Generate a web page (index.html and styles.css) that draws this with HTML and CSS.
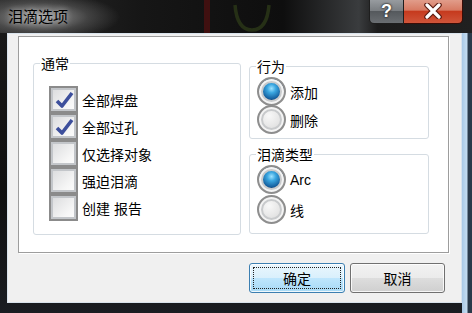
FILE: index.html
```html
<!DOCTYPE html>
<html>
<head>
    <meta charset="utf-8">
    <title>泪滴选项</title>
    <link rel="stylesheet" href="styles.css">
</head>
<body>
    <div class="window">
        <div class="titlebar">
            <!-- things seen through the glass -->
            <svg class="behind" width="120" height="33" viewBox="0 0 120 33">
                <rect x="0" y="0" width="6" height="33" fill="#401010"/>
                <path d="M31 5 Q33 30 48 30 Q63 30 65 5" fill="none" stroke="#263016" stroke-width="3.5"/>
            </svg>
            <span class="title">泪滴选项</span>
            <div class="caption-buttons">
                <div class="cap-btn help">?</div>
                <div class="cap-btn close">
                    <svg width="22" height="16" viewBox="0 0 22 16">
                        <path d="M5 2 L17 14 M17 2 L5 14" stroke="#5a1a10" stroke-width="5.5" stroke-linecap="round"/>
                        <path d="M5 2 L17 14 M17 2 L5 14" stroke="#fff" stroke-width="3.2" stroke-linecap="round"/>
                    </svg>
                </div>
            </div>
        </div>

        <div class="client">
            <div class="panel">
                <div class="group general">
                    <div class="group-title">通常</div>
                    <div class="check-list">
                        <div class="check"><span class="box"><svg width="22" height="20" viewBox="0 0 22 20"><path d="M4 11 L9 16 L19 3" fill="none" stroke="#3d4f9c" stroke-width="3.6" stroke-linejoin="round"/></svg></span>全部焊盘</div>
                        <div class="check"><span class="box"><svg width="22" height="20" viewBox="0 0 22 20"><path d="M4 11 L9 16 L19 3" fill="none" stroke="#3d4f9c" stroke-width="3.6" stroke-linejoin="round"/></svg></span>全部过孔</div>
                        <div class="check"><span class="box"></span>仅选择对象</div>
                        <div class="check"><span class="box"></span>强迫泪滴</div>
                        <div class="check"><span class="box"></span>创建 报告</div>
                    </div>
                </div>

                <div class="side">
                    <div class="group action">
                        <div class="group-title">行为</div>
                        <div class="radio tight"><span class="dot on"></span>添加</div>
                        <div class="radio tight"><span class="dot"></span>删除</div>
                    </div>
                    <div class="group shape">
                        <div class="group-title">泪滴类型</div>
                        <div class="radio"><span class="dot on"></span>Arc</div>
                        <div class="radio"><span class="dot"></span>线</div>
                    </div>
                </div>
            </div>

            <div class="buttons">
                <button class="btn default"><span class="focus">确定</span></button>
                <button class="btn">取消</button>
            </div>
        </div>
    </div>
</body>
</html>
```

FILE: styles.css
```css
body {
    margin: 0;
    background-color: #111;
    font-family: "Liberation Sans", "Noto Sans CJK SC", sans-serif;
}

.window {
    width: 472px;
    height: 313px;
    display: flex;
    flex-direction: column;
    background:
        linear-gradient(90deg, transparent 462px, #a9c9e6 462px, #c4dcf0 467px, #2a3a4a 468px),
        linear-gradient(180deg, #1b1b1b, #101010 60%, #1a1d22);
}

/* title bar */
.titlebar {
    position: relative;
    height: 33px;
    display: flex;
    align-items: flex-start;
    background:
        radial-gradient(ellipse 80px 24px at 40px 17px, rgba(190, 190, 190, 0.8), rgba(120, 120, 120, 0.4) 60%, transparent 100%),
        linear-gradient(90deg, #2a2a2a, #161616 30%, #0e0e0e 60%, #3a3c3e 76%, #1c1c1c 80%, #202020);
}

.behind {
    position: absolute;
    left: 204px;
    top: 0;
}

.title {
    position: relative;
    margin: 9px 0 0 8px;
    font-size: 15px;
    line-height: 16px;
    color: #000;
    text-shadow: 0 0 6px rgba(255, 255, 255, 0.6);
}

.caption-buttons {
    display: flex;
    margin-left: auto;
    margin-right: 9px;
    margin-top: -1px;
}

.cap-btn {
    height: 25px;
    box-sizing: border-box;
    display: flex;
    align-items: center;
    justify-content: center;
    border: 1px solid #1e1e1e;
    border-top: none;
}

.help {
    width: 35px;
    border-radius: 0 0 0 5px;
    background: linear-gradient(180deg, #9a9ea2, #7a7e82 48%, #55595d 52%, #6a6e72);
    color: #fff;
    font-weight: bold;
    font-size: 18px;
    text-shadow: 0 0 2px #222, 0 0 2px #222;
}

.close {
    width: 59px;
    border-left: none;
    border-color: #3a0c06;
    border-radius: 0 0 5px 0;
    background: linear-gradient(180deg, #e2a08e, #d77a63 46%, #c63a1e 52%, #d0553a);
}

/* client area */
.client {
    flex: 1;
    margin: 0 10px 10px 7px;
    display: flex;
    flex-direction: column;
    background-color: #f0f0f0;
    border: 1px solid #d9e3ec;
}

.panel {
    height: 217px;
    box-sizing: border-box;
    margin: 2px 12px 0 10px;
    padding: 26px 0 0 14px;
    display: flex;
    gap: 8px;
    background-color: #fff;
    border: 1px solid #9d9d9d;
    box-shadow: 1px 1px 0 #fff;
    font-size: 14px;
    color: #000;
}

.group {
    box-sizing: border-box;
    border: 1px solid #d5dce2;
    border-radius: 3px;
}

.group-title {
    width: fit-content;
    margin: -9px 0 0 6px;
    padding: 0 1px;
    line-height: 18px;
    background-color: #fff;
}

.general {
    width: 208px;
    height: 172px;
}

.check-list {
    margin-top: 13px;
    padding-left: 15px;
}

.check {
    display: flex;
    align-items: center;
    height: 27px;
    gap: 4px;
}

.box {
    width: 29px;
    height: 27px;
    box-sizing: border-box;
    display: flex;
    align-items: center;
    justify-content: center;
    border: 2px solid #8b8b8b;
    box-shadow: inset 0 0 0 2px #c3c6ca;
    background: linear-gradient(135deg, #d9dadc, #f6f6f6 70%, #fdfdfd);
}

.side {
    width: 180px;
    margin-top: 3px;
}

.action {
    height: 73px;
}

.shape {
    height: 80px;
    margin-top: 15px;
}

.radio {
    display: flex;
    align-items: center;
    gap: 4px;
    margin: 1px 0 0 7px;
    height: 29px;
}

.radio.tight + .radio.tight {
    margin-top: -1px;
}

.dot {
    width: 29px;
    height: 29px;
    box-sizing: border-box;
    border-radius: 50%;
    border: 2px solid #8e8e8e;
    box-shadow: inset 0 0 0 2px #f4f4f4, inset 0 0 0 4px #c8cacc;
    background: radial-gradient(circle at 40% 35%, #f8f8f8, #dedede 70%, #cfcfcf);
}

.dot.on {
    background:
        radial-gradient(circle at 50% 38%, #9ee2ff 0, #3aa6e0 22%, #155f9e 52%, #0c2f5a 62%, transparent 64%),
        radial-gradient(circle at 40% 35%, #fafafa, #e0e0e0);
}

/* dialog buttons */
.buttons {
    display: flex;
    justify-content: flex-end;
    gap: 5px;
    margin: 10px 16px 0 0;
}

.btn {
    width: 95px;
    height: 30px;
    padding: 0;
    font-family: "Liberation Sans", "Noto Sans CJK SC", sans-serif;
    font-size: 14px;
    color: #000;
    border: 1px solid #707070;
    border-radius: 3px;
    background: linear-gradient(180deg, #f2f2f2, #ebebeb 50%, #dddddd 51%, #cfcfcf);
    box-shadow: inset 0 0 0 1px rgba(255, 255, 255, 0.8);
}

.btn.default {
    width: 96px;
    border-color: #3c7fb1;
    background: linear-gradient(180deg, #eaf6fd, #d9f0fc 50%, #bee6fd 51%, #a7d9f5);
    padding: 3px;
}

.focus {
    display: flex;
    align-items: center;
    justify-content: center;
    height: 100%;
    border: 1px dotted #222;
    box-sizing: border-box;
}
```
